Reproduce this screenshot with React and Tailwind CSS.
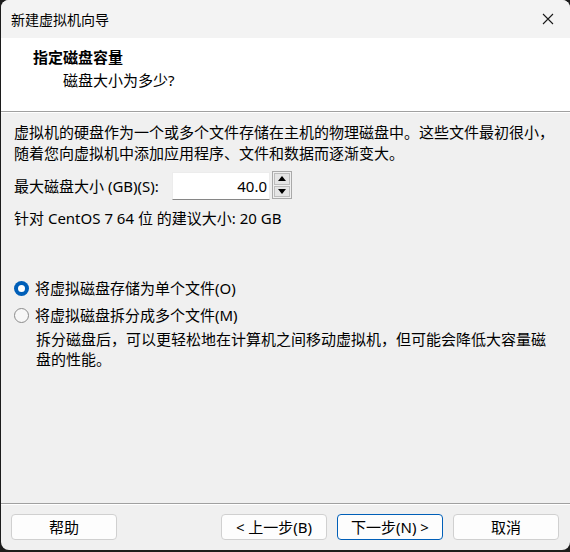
import React from 'react';

const font = { fontFamily: '"Noto Sans", "Noto Sans CJK SC", sans-serif' };

const Radio = ({ checked, label }) => (
  <div className="flex items-center h-[21px]">
    {checked ? (
      <span className="w-[15px] h-[15px] rounded-full bg-[#005fb8] flex items-center justify-center">
        <span className="w-[7px] h-[7px] rounded-full bg-white" />
      </span>
    ) : (
      <span className="w-[15px] h-[15px] rounded-full border border-[#8b8b8b] bg-[#f7f7f7]" />
    )}
    <span className="ml-[6px]">{label}</span>
  </div>
);

const Button = ({ children, primary }) => (
  <button
    className={`w-[106px] h-[26px] rounded-[4px] bg-[#fdfdfd] border text-[15px] leading-none ${
      primary ? 'border-[#005fb8]' : 'border-[#d0d0d0]'
    }`}
  >
    {children}
  </button>
);

export default function App() {
  return (
    <div className="w-[570px] h-[552px] bg-[#1c1c1c] pl-px" style={font}>
      <div className="w-[569px] h-[550px] rounded-lg overflow-hidden bg-[#f0f0f0] flex flex-col text-black">
        <div className="h-[38px] bg-[#f3f3f3] flex items-center justify-between pl-[10px] pr-[15px] shrink-0">
          <span className="text-[14px]">新建虚拟机向导</span>
          <svg width="12" height="12" viewBox="0 0 12 12" className="mr-[1px]">
            <path d="M1 1L11 11M11 1L1 11" stroke="#1a1a1a" strokeWidth="1.1" />
          </svg>
        </div>

        <div className="h-[73px] bg-white pt-[9px] shrink-0">
          <div className="pl-[32px] text-[15px] font-bold leading-[20px]">指定磁盘容量</div>
          <div className="pl-[62px] mt-[3px] text-[15px] leading-[20px]">磁盘大小为多少?</div>
        </div>
        <div className="h-px bg-[#a0a0a0] shrink-0" />
        <div className="h-px bg-white shrink-0" />

        <div className="flex-1 px-[13px] pt-[9px] text-[15px]">
          <p className="leading-[21px]">
            虚拟机的硬盘作为一个或多个文件存储在主机的物理磁盘中。这些文件最初很小，
            <br />
            随着您向虚拟机中添加应用程序、文件和数据而逐渐变大。
          </p>

          <div className="flex items-center mt-[8px] h-[28px]">
            <span className="w-[158px]">最大磁盘大小 (GB)(S):</span>
            <div className="w-[98px] h-[28px] bg-white border border-[#ececec] border-b-[#868686] flex items-center justify-end pr-[2px]">
              40.0
            </div>
            <div className="ml-[2px] w-[20px] h-[28px] border border-[#a9a9a9] flex flex-col p-px gap-px -mt-[2px]">
              <div className="flex-1 bg-[#e5e5e5] border border-[#bdbdbd] flex items-center justify-center">
                <svg width="8" height="5" viewBox="0 0 8 5">
                  <path d="M4 0L8 5H0Z" fill="#000" />
                </svg>
              </div>
              <div className="flex-1 bg-[#e5e5e5] border border-[#bdbdbd] flex items-center justify-center">
                <svg width="8" height="5" viewBox="0 0 8 5">
                  <path d="M0 0H8L4 5Z" fill="#000" />
                </svg>
              </div>
            </div>
          </div>

          <p className="mt-[8px] leading-[21px]">针对 CentOS 7 64 位 的建议大小: 20 GB</p>

          <div className="mt-[49px] flex flex-col gap-[6px]">
            <Radio checked label="将虚拟磁盘存储为单个文件(O)" />
            <Radio label="将虚拟磁盘拆分成多个文件(M)" />
          </div>
          <p className="pl-[22px] mt-[3px] leading-[20px]">
            拆分磁盘后，可以更轻松地在计算机之间移动虚拟机，但可能会降低大容量磁
            <br />
            盘的性能。
          </p>
        </div>

        <div className="h-px bg-[#a0a0a0] shrink-0" />
        <div className="h-px bg-white shrink-0" />
        <div className="h-[45px] flex items-start pt-[9px] pl-[10px] pr-[11px] shrink-0">
          <Button>帮助</Button>
          <div className="flex-1" />
          <div className="flex gap-[10px]">
            <Button>&lt; 上一步(B)</Button>
            <Button primary>下一步(N) &gt;</Button>
            <Button>取消</Button>
          </div>
        </div>
      </div>
    </div>
  );
}
